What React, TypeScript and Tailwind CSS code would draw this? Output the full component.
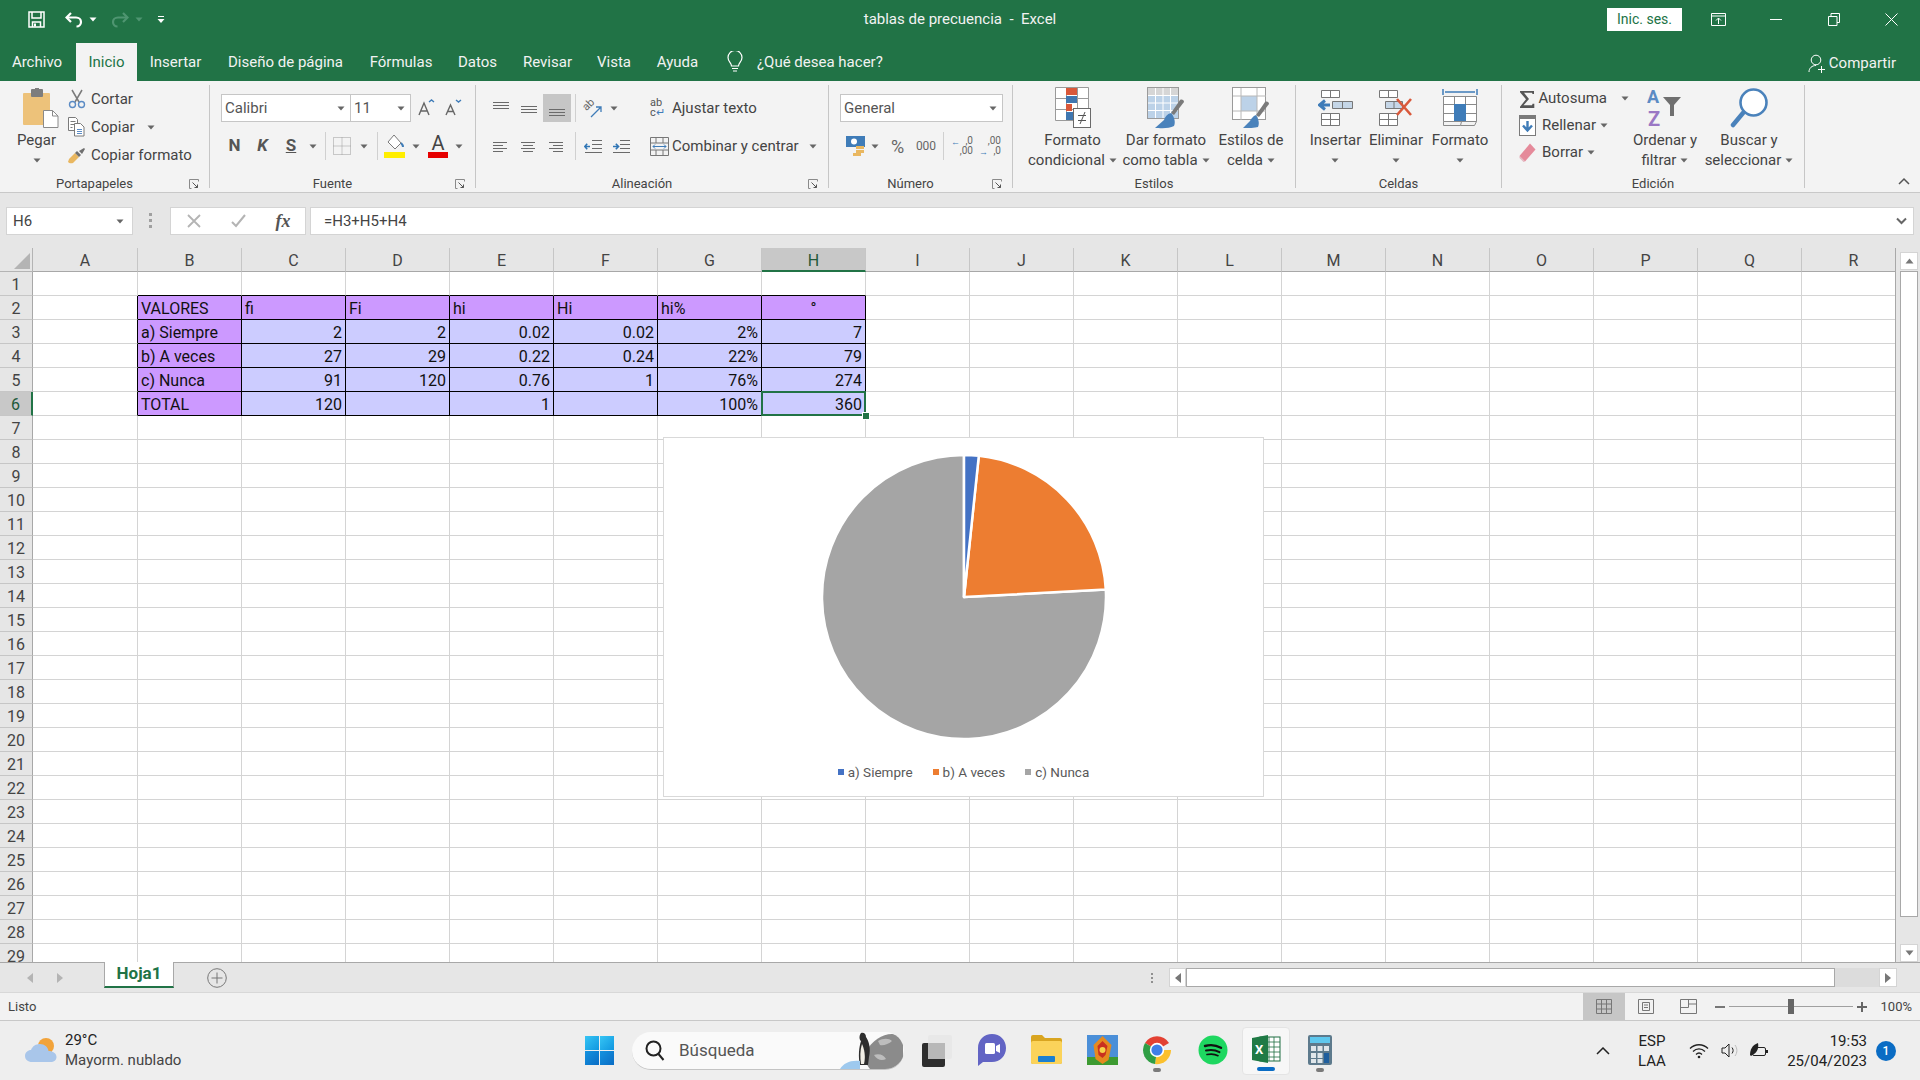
import React from 'react';

const colLetters = ['A', 'B', 'C', 'D', 'E', 'F', 'G', 'H', 'I', 'J', 'K', 'L', 'M', 'N', 'O', 'P', 'Q', 'R'];

// filas 2 a 6 de la tabla, columnas B a H
const tableRows = [
  ['VALORES', 'fi', 'Fi', 'hi', 'Hi', 'hi%', '°'],
  ['a) Siempre', '2', '2', '0.02', '0.02', '2%', '7'],
  ['b) A veces', '27', '29', '0.22', '0.24', '22%', '79'],
  ['c) Nunca', '91', '120', '0.76', '1', '76%', '274'],
  ['TOTAL', '120', '', '1', '', '100%', '360'],
];

const tabs = [
  { label: 'Archivo', w: 'w-[74px]' },
  { label: 'Inicio', w: 'w-[61px] ml-[2px]', active: true },
  { label: 'Insertar', w: 'w-[77px]' },
  { label: 'Diseño de página', w: 'w-[143px]' },
  { label: 'Fórmulas', w: 'w-[88px]' },
  { label: 'Datos', w: 'w-[65px]' },
  { label: 'Revisar', w: 'w-[75px]' },
  { label: 'Vista', w: 'w-[58px]' },
  { label: 'Ayuda', w: 'w-[69px]' },
];

const Caret = ({ color = '#666' }: { color?: string }) => (
  <svg width="8" height="5" viewBox="0 0 8 5"><path d="M0.5 0.5h7L4 4.5z" fill={color} /></svg>
);

const Slot = ({ w, children, active }: { w: string; children?: React.ReactNode; active?: boolean }) => (
  <div className={`${w} h-[28px] flex items-center justify-center shrink-0 ${active ? 'bg-[#c6c6c6]' : ''}`}>{children}</div>
);

const Sep = ({ w = 'w-[8px]' }: { w?: string }) => (
  <div className={`${w} h-[28px] flex justify-center shrink-0`}><div className="w-px h-full bg-[#d0d0d0]" /></div>
);

const Launcher = () => (
  <svg width="10" height="10" viewBox="0 0 10 10" fill="none" stroke="#8a8a8a" strokeWidth="1">
    <path d="M0.5 9.5v-9h9v2M0.5 9.5h2" />
    <path d="M3.5 3.5l5 5M8.5 5.5v3h-3" stroke="#555" />
  </svg>
);

const Group = ({ w, label, launcher, children }: { w: string; label: string; launcher?: boolean; children: React.ReactNode }) => (
  <div className={`${w} h-full flex flex-col border-r border-[#c6c6c6] shrink-0`}>
    <div className="flex-1 min-h-0">{children}</div>
    <div className="h-[14px] flex items-start text-[13px] leading-[14px] text-[#444]">
      <div className="flex-1 text-center pt-[3px]">{label}</div>
      {launcher && <div className="w-[20px] pt-[5px] flex items-center"><Launcher /></div>}
    </div>
  </div>
);

const BigButton = ({ w, icon, lines, caretOwnLine }: { w: string; icon: React.ReactNode; lines: string[]; caretOwnLine?: boolean }) => (
  <div className={`${w} flex flex-col items-center pt-[3px] shrink-0 text-[15px] leading-[20px] text-[#444]`}>
    <div className="h-[40px] flex items-center justify-center">{icon}</div>
    <div className="mt-[2px] flex flex-col items-center whitespace-nowrap">
      {lines.map((l, i) => (
        <div key={i} className="flex items-center gap-[4px]">
          {l}
          {!caretOwnLine && i === lines.length - 1 && <Caret />}
        </div>
      ))}
      {caretOwnLine && <div className="h-[20px] flex items-center"><Caret /></div>}
    </div>
  </div>
);

const AlignLines = ({ kind }: { kind: 'top' | 'mid' | 'bot' | 'left' | 'center' | 'right' }) => {
  const ys = kind === 'top' ? [2, 5, 8] : kind === 'mid' ? [6, 9, 12] : kind === 'bot' ? [9, 12, 15] : [4, 7, 10, 13];
  const seg = (i: number): [number, number] => {
    if (kind === 'left') return i % 2 ? [1, 11] : [1, 15];
    if (kind === 'center') return i % 2 ? [3, 13] : [1, 15];
    if (kind === 'right') return i % 2 ? [5, 15] : [1, 15];
    return [1, 17];
  };
  return (
    <svg width="18" height="17" viewBox="0 0 18 17" stroke="#6a6a6a" strokeWidth="1">
      {ys.map((y, i) => {
        const [a, b] = seg(i);
        return <line key={y} x1={a} x2={b} y1={y + 0.5} y2={y + 0.5} />;
      })}
    </svg>
  );
};

const Indent = ({ flip }: { flip?: boolean }) => (
  <svg width="19" height="17" viewBox="0 0 19 17" stroke="#6a6a6a" strokeWidth="1" fill="none">
    <path d="M8 2.5h10M8 6.5h10M8 10.5h10M1 14.5h17" />
    {flip ? (
      <path d="M1 8.5h5M3.8 5.8L6.5 8.5L3.8 11.2" stroke="#2f75b5" strokeWidth="1.6" />
    ) : (
      <path d="M6 8.5H1M3.2 5.8L0.8 8.5L3.2 11.2" stroke="#2f75b5" strokeWidth="1.6" />
    )}
  </svg>
);

const PasteIcon = () => (
  <svg width="36" height="40" viewBox="0 0 36 40">
    <rect x="0" y="5" width="27" height="32" rx="1" fill="#edc27a" />
    <rect x="8" y="1" width="12" height="8" rx="1" fill="#7d7d7d" />
    <rect x="12" y="0" width="4" height="3" fill="#7d7d7d" />
    <path d="M20.5 22.5h9l5.5 5.5v11.5h-14.5z" fill="#fff" stroke="#8a8a8a" />
    <path d="M29.5 22.5v5.5h5.5" fill="none" stroke="#8a8a8a" />
  </svg>
);

const ScissorsIcon = () => (
  <svg width="18" height="20" viewBox="0 0 18 20" fill="none">
    <path d="M4 1l7 12M14 1L7 13" stroke="#7a7a7a" strokeWidth="1.5" />
    <circle cx="4.5" cy="15.5" r="3" stroke="#5b8bc4" strokeWidth="1.4" />
    <circle cx="13.5" cy="15.5" r="3" stroke="#5b8bc4" strokeWidth="1.4" />
  </svg>
);

const CopyIcon = () => (
  <svg width="17" height="20" viewBox="0 0 17 20" fill="#fff" stroke="#7a7a7a">
    <path d="M0.5 0.5h7l2 2v11h-9z" />
    <path d="M2.5 4.5h5M2.5 7.5h5M2.5 10.5h2" />
    <path d="M6.5 6.5h6l3.5 3.5v9h-9.5z" />
    <path d="M9 12.5h5M9 14.5h5M9 16.5h5" stroke="#5b8bc4" />
  </svg>
);

const BrushIcon = () => (
  <svg width="18" height="17" viewBox="0 0 18 17">
    <path d="M1 12l6-6 4 4-6 6c-2 .6-4 .2-5-1z" fill="#e9b760" />
    <path d="M7 6l2-2 4 4-2 2z" fill="#6f6f6f" />
    <path d="M11 4l5-3 1 1-3 5z" fill="#6f6f6f" />
  </svg>
);

const CondFormatIcon = () => (
  <svg width="36" height="42" viewBox="0 0 36 42">
    <path d="M0.5 0.5h33v33h-33zM11.5 0.5v33M22.5 0.5v33M0.5 11.5h33M0.5 22.5h33" fill="#fff" stroke="#9a9a9a" />
    <rect x="11" y="1" width="11" height="7" fill="#d9583a" />
    <rect x="11" y="9" width="11" height="7" fill="#4077b0" />
    <rect x="11" y="17" width="6" height="7" fill="#d9583a" />
    <rect x="11" y="25" width="7" height="8" fill="#4077b0" />
    <rect x="18.5" y="21.5" width="17" height="19" fill="#fff" stroke="#6a6a6a" />
    <path d="M23 28.5h8M23 33.5h8M30 25l-5 12" stroke="#555" fill="none" />
  </svg>
);

const TableFormatIcon = () => (
  <svg width="38" height="42" viewBox="0 0 38 42">
    <rect x="0.5" y="0.5" width="31" height="31" fill="#fff" stroke="#9a9a9a" />
    <rect x="1" y="1" width="30" height="7" fill="#d6d6d6" />
    <rect x="1" y="8" width="30" height="23" fill="#bcd2e8" />
    <path d="M8.5 1v30M16 1v30M23.5 1v30M1 8.5h30M1 16h30M1 23.5h30" stroke="#fff" />
    <path d="M37 15L27 28l-3-2 9-13c2-1 4 0 4 2z" fill="#7a7a7a" />
    <path d="M24 26c-4 1-6 4-7 7l-9 8c5 0 14 1 19-2 2-4 0-10-3-13z" fill="#4a82bb" />
  </svg>
);

const CellStyleIcon = () => (
  <svg width="38" height="42" viewBox="0 0 38 42">
    <rect x="0.5" y="0.5" width="33" height="32" fill="#fff" stroke="#9a9a9a" />
    <rect x="9" y="9" width="16" height="15" fill="#bcd2e8" />
    <path d="M9 1v32M25 1v32M1 9h33M1 24h33" stroke="#b8b8b8" fill="none" />
    <path d="M37 17L27 30l-3-2 9-13c2-1 4 0 4 2z" fill="#7a7a7a" />
    <path d="M24 28c-3 1-5 4-6 6l-7 7c5 0 12 0 15-1 2-4 0-9-2-12z" fill="#4a82bb" />
  </svg>
);

const InsertIcon = () => (
  <svg width="36" height="36" viewBox="0 0 36 36" fill="#fff" stroke="#777">
    <path d="M3.5 0.5h18v7h-18zM12.5 0.5v7" />
    <path d="M3.5 23.5h18v12h-18zM12.5 23.5v12M3.5 29.5h18" />
    <path d="M14.5 11.5h20v7h-20zM24.5 11.5v7" fill="#c5d6e7" />
    <path d="M12 15H3M7 10.5L1.5 15L7 19.5" stroke="#3f7cb8" strokeWidth="3" fill="none" />
  </svg>
);

const DeleteIcon = () => (
  <svg width="36" height="36" viewBox="0 0 36 36" fill="#fff" stroke="#777">
    <path d="M1.5 0.5h18v7h-18zM10.5 0.5v7" />
    <path d="M1.5 23.5h18v12h-18zM10.5 23.5v12M1.5 29.5h18" />
    <path d="M7.5 11.5h17v7h-17zM16 11.5v7" fill="#c5d6e7" />
    <path d="M19 9l14 16M33 9L19 25" stroke="#d9583a" strokeWidth="2.6" fill="none" />
  </svg>
);

const FormatIcon = () => (
  <svg width="36" height="40" viewBox="0 0 36 40" fill="none">
    <path d="M1 1v6M35 1v6M3 4h30" stroke="#3f7cb8" strokeWidth="1.5" />
    <path d="M1.5 8.5h33v25h-33zM1.5 16.5h33M1.5 25.5h33M12.5 8.5v25M23.5 8.5v25" fill="#fff" stroke="#8a8a8a" />
    <rect x="12" y="16" width="12" height="17" fill="#3f7cb8" />
    <path d="M1.5 33.5v4h17l1-4M18.5 37.5h14l2-4" stroke="#8a8a8a" />
  </svg>
);

const SumIcon = () => (
  <svg width="17" height="18" viewBox="0 0 17 18"><path d="M1 1h14v3h-1.5l-.5-1.3H5l5 6.3-5.5 6.3H13l.6-1.5H15.3V18H1v-1.3L7 9.3 1 2.3z" fill="#555" /></svg>
);

const FillIcon = () => (
  <svg width="18" height="21" viewBox="0 0 18 21">
    <rect x="0.5" y="0.5" width="16" height="20" fill="#fff" stroke="#7a7a7a" />
    <rect x="1" y="1" width="15" height="3" fill="#7a7a7a" />
    <path d="M8.5 6v8M4 10.5l4.5 5 4.5-5" stroke="#3f7cb8" strokeWidth="2.4" fill="none" />
  </svg>
);

const EraserIcon = () => (
  <svg width="17" height="19" viewBox="0 0 17 19"><path d="M11 0.5l5.5 6-10.5 12-5.5-5.5z" fill="#e58a9a" /><path d="M0.5 13l5.5 5.5-1.5 0.5L0.5 15z" fill="#e3b6bf" /></svg>
);

const SortIcon = () => (
  <svg width="36" height="42" viewBox="0 0 36 42">
    <text x="0" y="16" fontSize="18" fontWeight="700" fill="#5b8bc4" fontFamily="Roboto, sans-serif">A</text>
    <text x="1" y="39" fontSize="20" fontWeight="700" fill="#9a77c4" fontFamily="Roboto, sans-serif">Z</text>
    <path d="M16 10h18l-7 8v11h-4V18z" fill="#6f6f6f" />
  </svg>
);

const SearchBigIcon = () => (
  <svg width="38" height="42" viewBox="0 0 38 42" fill="none">
    <circle cx="23.5" cy="15.5" r="13" stroke="#4a82bb" strokeWidth="2.6" fill="#fff" />
    <path d="M13 26L3 38" stroke="#4a82bb" strokeWidth="4.5" strokeLinecap="round" />
  </svg>
);

const Excel = () => (
  <svg width="30" height="30" viewBox="0 0 30 30">
    <rect x="9" y="3" width="20" height="24" fill="#fff" stroke="#1f6e43" />
    <path d="M18 3v24M23 3v24M9 8h20M9 13h20M9 18h20M9 23h20" stroke="#1f6e43" strokeWidth="0.8" />
    <path d="M1 4l16-3v28L1 26z" fill="#1f7a45" />
    <text x="4" y="20" fontSize="13" fontWeight="700" fill="#fff" fontFamily="Roboto, sans-serif">X</text>
  </svg>
);

const WindowsLogo = () => (
  <svg width="29" height="29" viewBox="0 0 29 29">
    <defs>
      <linearGradient id="winA" x1="0" y1="0" x2="1" y2="1"><stop offset="0" stopColor="#36c5f4" /><stop offset="1" stopColor="#1096e0" /></linearGradient>
      <linearGradient id="winB" x1="0" y1="0" x2="1" y2="1"><stop offset="0" stopColor="#1493e0" /><stop offset="1" stopColor="#0a6cc4" /></linearGradient>
    </defs>
    <rect x="0" y="0" width="14" height="14" fill="url(#winA)" />
    <rect x="15" y="0" width="14" height="14" fill="url(#winA)" />
    <rect x="0" y="15" width="14" height="14" fill="url(#winB)" />
    <rect x="15" y="15" width="14" height="14" fill="url(#winB)" />
  </svg>
);

const Penguin = () => (
  <svg width="70" height="38" viewBox="0 0 70 38">
    <path d="M32 20c6-10 16-17 26-17 6 0 10 4 11 10v14c-2 6-5 9-10 11H36c-4-4-6-12-4-18z" fill="#8b8b8b" />
    <path d="M44 10c5-3 11-3 14 0-3 3-9 5-12 4zM40 24c5-2 10 0 12 4-4 2-9 1-12-4z" fill="#bdbdbd" />
    <path d="M27 2c3-1 5 1 5 4 3 4 5 12 3 20l-1 8h-8c-2-8-1-18 1-24-2-1-2-6 0-8z" fill="#2e2e2e" />
    <path d="M28 13c2 4 4 12 2 20h-3c-1-7-1-14 1-20z" fill="#f2efe6" />
    <path d="M6 38c4-6 10-9 20-8v8z" fill="#9ec9ee" />
  </svg>
);

const Chrome = () => (
  <svg width="30" height="30" viewBox="0 0 30 30">
    <path d="M15 15L3 8a14 14 0 0 1 24 0z" fill="#e34133" />
    <path d="M15 15H29A14 14 0 0 1 13 29z" fill="#fbc02d" />
    <path d="M15 15L13 29A14 14 0 0 1 3 8z" fill="#2f9e44" />
    <circle cx="15" cy="15" r="7.2" fill="#fff" />
    <circle cx="15" cy="15" r="5.6" fill="#3f7fe8" />
  </svg>
);

const Spotify = () => (
  <svg width="30" height="30" viewBox="0 0 30 30" fill="none">
    <circle cx="15" cy="15" r="14.5" fill="#1ed760" />
    <path d="M7 11c5-1.500 11-1 16 1.800" stroke="#111" strokeWidth="2.4" strokeLinecap="round" />
    <path d="M8 15.500c4.500-1 9.500-.6 13.500 1.600" stroke="#111" strokeWidth="2" strokeLinecap="round" />
    <path d="M9 19.500c4-.8 8-.5 11 1.200" stroke="#111" strokeWidth="1.700" strokeLinecap="round" />
  </svg>
);

const Dot = ({ on }: { on?: boolean }) => (
  <div className={`${on ? 'w-[18px] bg-[#0a6cc4]' : 'w-[8px] bg-[#7a7a7a]'} h-[4px] rounded-[2px] mt-[3px]`} />
);

const TaskIcon = ({ w, children, run, on }: { w: string; children: React.ReactNode; run?: boolean; on?: boolean }) => (
  <div className={`${w} h-[48px] flex flex-col items-center justify-end pb-[1px] shrink-0 rounded-[4px] ${on ? 'bg-[#f7f7f7] border border-[#e4e4e4]' : ''}`}>
    <div className="h-[30px] flex items-center justify-center">{children}</div>
    <div className="h-[9px] flex items-start justify-center">{(run || on) && <Dot on={on} />}</div>
  </div>
);

const Sheet = () => (
  <div className="relative flex-1 min-w-0 overflow-hidden">
    <div className="grid grid-cols-[33px_105px_repeat(17,104px)] auto-rows-[24px] text-[16px] leading-[25px]">
      {/* cabecera de columnas */}
      <div className="bg-[#e6e6e6] border-r border-b border-[#b4b4b4] flex items-end justify-end p-[2px]">
        <svg width="16" height="16" viewBox="0 0 16 16"><path d="M16 0v16H0z" fill="#b4b4b4" /></svg>
      </div>
      {colLetters.map((c) => (
        <div
          key={c}
          className={`text-center border-r border-[#c6c6c6] ${c === 'H' ? 'bg-[#c8c8c8] border-b-2 border-b-[#217346] text-[#215a3a]' : 'bg-[#e6e6e6] border-b border-b-[#a8a8a8] text-[#444]'}`}
        >
          {c}
        </div>
      ))}
      {Array.from({ length: 29 }, (_, r) => {
        const selRow = r === 5;
        return (
          <React.Fragment key={r}>
            <div className={`text-center border-b border-b-[#c6c6c6] ${selRow ? 'bg-[#c8c8c8] text-[#215a3a] border-r-2 border-r-[#217346]' : 'bg-[#e6e6e6] text-[#444] border-r border-r-[#a8a8a8]'}`}>
              {r + 1}
            </div>
            {colLetters.map((_c, c) => {
              const inTable = r >= 1 && r <= 5 && c >= 1 && c <= 7;
              const rightDark = r >= 1 && r <= 5 && c >= 0 && c <= 7;
              const bottomDark = r >= 0 && r <= 5 && c >= 1 && c <= 7;
              const value = inTable ? tableRows[r - 1][c - 1] : '';
              const purple = inTable && (r === 1 || c === 1);
              const isLeft = c === 1 || (r === 1 && c < 7);
              const isCenter = r === 1 && c === 7;
              const selected = r === 5 && c === 7;
              return (
                <div
                  key={c}
                  className={`relative px-[3px] text-[#111] whitespace-nowrap border-r border-b ${rightDark ? 'border-r-black' : 'border-r-[#d4d4d4]'} ${bottomDark ? 'border-b-black' : 'border-b-[#d4d4d4]'} ${purple ? 'bg-[#cc99ff]' : inTable ? 'bg-[#ccccff]' : 'bg-white'} ${isLeft ? 'text-left' : isCenter ? 'text-center' : 'text-right'}`}
                >
                  {value}
                  {selected && <div className="absolute inset-[-1px] border-2 border-[#217346]" />}
                </div>
              );
            })}
          </React.Fragment>
        );
      })}
    </div>

    {/* tirador de la celda activa */}
    <div className="absolute left-[862px] top-[164px] w-[6px] h-[6px] bg-[#217346] border border-white box-content" />

    {/* gráfico circular flotante */}
    <div className="absolute left-[663px] top-[189px] w-[601px] h-[360px] bg-white border border-[#d9d9d9] flex flex-col items-center pt-[14px]">
      <svg width="290" height="290" viewBox="0 0 290 290">
        <g stroke="#fff" strokeWidth="2.5" strokeLinejoin="round">
          <path d="M145 145L145 3A142 142 0 1 0 286.8 137.6Z" fill="#a5a5a5" />
          <path d="M145 145L159.8 3.8A142 142 0 0 1 286.8 137.6Z" fill="#ed7d31" />
          <path d="M145 145L145 3A142 142 0 0 1 159.8 3.8Z" fill="#4472c4" />
        </g>
      </svg>
      <div className="mt-[22px] flex items-center text-[13.5px] leading-[16px] text-[#595959]">
        <div className="w-[6px] h-[6px] bg-[#4472c4]" />
        <span className="ml-[4px]">a) Siempre</span>
        <div className="ml-[20px] w-[6px] h-[6px] bg-[#ed7d31]" />
        <span className="ml-[4px]">b) A veces</span>
        <div className="ml-[20px] w-[6px] h-[6px] bg-[#a5a5a5]" />
        <span className="ml-[4px]">c) Nunca</span>
      </div>
    </div>
  </div>
);

export default function App() {
  return (
    <div className="w-[1920px] h-[1080px] overflow-hidden flex flex-col bg-white [font-family:Roboto,sans-serif]">
      {/* barra de título */}
      <div className="h-[43px] bg-[#217346] flex items-center text-white shrink-0 pb-[4px]">
        <div className="flex-1 flex items-center">
          <svg className="ml-[28px]" width="17" height="17" viewBox="0 0 17 17" fill="none" stroke="#fff" strokeWidth="1.500">
            <path d="M1 1h15v15H1z" /><path d="M4 1v6h9V1" /><path d="M4.500 16v-5h8v5" /><rect x="6" y="12.500" width="2" height="3" fill="#fff" stroke="none" />
          </svg>
          <svg className="ml-[20px]" width="18" height="16" viewBox="0 0 18 16" fill="none" stroke="#fff" strokeWidth="2.200">
            <path d="M6 1L1.500 5.500L6 10" /><path d="M2 5.500h9c3 0 5 2 5 4.500s-2 4.500-4.500 4.500" />
          </svg>
          <span className="ml-[6px]"><Caret color="#fff" /></span>
          <svg className="ml-[14px]" width="18" height="16" viewBox="0 0 18 16" fill="none" stroke="#4f9571" strokeWidth="2.200">
            <path d="M12 1l4.500 4.500L12 10" /><path d="M16 5.500H7c-3 0-5 2-5 4.500s2 4.500 4.500 4.500" />
          </svg>
          <span className="ml-[6px]"><Caret color="#4f9571" /></span>
          <svg className="ml-[14px]" width="8" height="8" viewBox="0 0 8 8"><path d="M1 0.500h6" stroke="#fff" /><path d="M0.500 3h7L4 7z" fill="#fff" /></svg>
        </div>
        <div className="text-[15px] text-[#f2f2f2] whitespace-pre">tablas de precuencia  -  Excel</div>
        <div className="flex-1 flex items-center justify-end">
          <div className="w-[75px] h-[23px] bg-white text-[#217346] text-[14px] flex items-center justify-center">Inic. ses.</div>
          <div className="w-[73px] flex justify-center">
            <svg width="15" height="13" viewBox="0 0 15 13" fill="none" stroke="#fff"><path d="M0.500 0.500h14v12h-14zM0.500 3h14" /><path d="M7.500 11V5M5 7.500l2.500-2.500 2.500 2.500" /></svg>
          </div>
          <div className="w-[42px] flex justify-center"><div className="w-[12px] h-px bg-white" /></div>
          <div className="w-[74px] flex justify-center">
            <svg width="12" height="13" viewBox="0 0 12 13" fill="none" stroke="#fff"><path d="M0.500 3.500h8.500v9H0.500zM3 3.500V0.500h8.500v9H9" /></svg>
          </div>
          <div className="w-[40px] flex justify-center mr-[9px]">
            <svg width="13" height="13" viewBox="0 0 13 13" stroke="#fff"><path d="M0.500 0.500l12 12M12.500 0.500l-12 12" /></svg>
          </div>
        </div>
      </div>

      {/* pestañas */}
      <div className="h-[38px] bg-[#217346] flex items-stretch text-[15px] text-[#f2f2f2] shrink-0">
        {tabs.map((t) => (
          <div key={t.label} className={`${t.w} flex items-center justify-center ${t.active ? 'bg-[#f3f3f3] text-[#217346]' : ''}`}>{t.label}</div>
        ))}
        <div className="ml-[14px] flex items-center">
          <svg width="18" height="22" viewBox="0 0 18 22" fill="none" stroke="#fff" strokeWidth="1.200">
            <path d="M5.500 15c0-3-3.500-4.500-3.500-8.500a7 7 0 0 1 14 0c0 4-3.500 5.500-3.500 8.500z" /><path d="M6 17.500h6M7 20h4" />
          </svg>
          <span className="ml-[13px]">¿Qué desea hacer?</span>
        </div>
        <div className="ml-auto mr-[24px] flex items-center pt-[3px]">
          <svg width="18" height="20" viewBox="0 0 18 20" fill="none" stroke="#fff"><circle cx="8" cy="6" r="4.800" /><path d="M1 18c0-4 3-6.500 7-6.500M13.500 12v7M10 15.500h7" /></svg>
          <span className="ml-[3px]">Compartir</span>
        </div>
      </div>

      {/* cinta */}
      <div className="h-[112px] bg-[#f3f3f3] border-b border-[#c8c8c8] py-[4px] flex shrink-0">
        <Group w="w-[210px]" label="Portapapeles" launcher>
          <div className="flex">
            <div className="w-[68px] pl-[18px] pt-[3px] flex flex-col items-start">
              <div className="ml-[5px]"><PasteIcon /></div>
              <div className="w-[37px] mt-[2px] text-[15px] leading-[20px] text-[#444] flex flex-col items-center">
                Pegar
                <div className="h-[20px] flex items-center"><Caret /></div>
              </div>
            </div>
            <div className="flex flex-col text-[15px] text-[#444]">
              <div className="h-[28px] flex items-center"><div className="w-[23px]"><ScissorsIcon /></div>Cortar</div>
              <div className="h-[28px] flex items-center"><div className="w-[23px]"><CopyIcon /></div>Copiar<span className="ml-[12px]"><Caret /></span></div>
              <div className="h-[28px] flex items-center"><div className="w-[23px]"><BrushIcon /></div>Copiar formato</div>
            </div>
          </div>
        </Group>

        <Group w="w-[266px]" label="Fuente" launcher>
          <div className="pl-[11px] pt-[9px] flex flex-col gap-[10px] text-[15px] text-[#555]">
            <div className="flex items-center h-[28px]">
              <div className="w-[130px] h-[28px] bg-white border border-[#c6c6c6] flex items-center justify-between px-[3px] pr-[5px]">Calibri<Caret /></div>
              <div className="w-[60px] h-[28px] bg-white border border-l-0 border-[#c6c6c6] flex items-center justify-between pl-[3px] pr-[5px]">11<Caret /></div>
              <Slot w="w-[27px] ml-[1px]">
                <svg width="18" height="18" viewBox="0 0 18 18" fill="none" stroke="#666" strokeWidth="1.400"><path d="M2 16L7 4l5 12M3.500 12h7" /><path d="M12 3l2.500-2 2.500 2" stroke="#3f7cb8" /></svg>
              </Slot>
              <Slot w="w-[27px]">
                <svg width="18" height="18" viewBox="0 0 18 18" fill="none" stroke="#666" strokeWidth="1.400"><path d="M2 16L6.500 6 11 16M3.500 12.500h6" /><path d="M12 1l2.500 2 2.500-2" stroke="#3f7cb8" /></svg>
              </Slot>
            </div>
            <div className="flex items-center h-[28px]">
              <Slot w="w-[27px]"><span className="font-bold text-[17px] text-[#555]">N</span></Slot>
              <Slot w="w-[29px]"><span className="font-bold italic text-[17px] text-[#555]">K</span></Slot>
              <Slot w="w-[28px]"><span className="font-bold underline text-[17px] text-[#555]">S</span></Slot>
              <Slot w="w-[16px]"><Caret /></Slot>
              <Sep w="w-[9px]" />
              <Slot w="w-[24px]">
                <svg width="18" height="18" viewBox="0 0 18 18" fill="none" stroke="#9a9a9a" strokeDasharray="1 1"><path d="M0.500 0.500h17v17h-17zM9 0.500v17M0.500 9h17" /></svg>
              </Slot>
              <Slot w="w-[20px]"><Caret /></Slot>
              <Sep w="w-[7px]" />
              <Slot w="w-[26px]">
                <svg width="21" height="24" viewBox="0 0 21 24" fill="none">
                  <path d="M10 1l7 8-6 6-7-7z" fill="#fff" stroke="#7a7a7a" />
                  <path d="M17 9c1.500 1.500 2 3 2 4" stroke="#3f7cb8" strokeWidth="2" />
                  <rect x="0" y="18" width="21" height="6" fill="#ffee00" />
                </svg>
              </Slot>
              <Slot w="w-[18px]"><Caret /></Slot>
              <Slot w="w-[26px]">
                <div className="w-[20px] flex flex-col items-center text-[20px] leading-[17px] text-[#444]">A<div className="w-[20px] h-[6px] bg-[#e60000]" /></div>
              </Slot>
              <Slot w="w-[16px]"><Caret /></Slot>
            </div>
          </div>
        </Group>

        <Group w="w-[353px]" label="Alineación" launcher>
          <div className="pl-[11px] pt-[9px] flex">
            <div className="flex flex-col gap-[10px]">
              <div className="flex items-center">
                <Slot w="w-[28px]"><AlignLines kind="top" /></Slot>
                <Slot w="w-[28px]"><AlignLines kind="mid" /></Slot>
                <Slot w="w-[28px]" active><AlignLines kind="bot" /></Slot>
                <Sep />
                <Slot w="w-[30px]">
                  <svg width="24" height="24" viewBox="0 0 24 24" fill="none">
                    <text x="1" y="11" fontSize="11" fill="#666" fontFamily="Roboto, sans-serif" transform="rotate(-45 8 9)">ab</text>
                    <path d="M9 21l10-10M14 11h5v5" stroke="#3f7cb8" strokeWidth="1.300" />
                  </svg>
                </Slot>
                <Slot w="w-[10px]"><Caret /></Slot>
              </div>
              <div className="flex items-center">
                <Slot w="w-[28px]"><AlignLines kind="left" /></Slot>
                <Slot w="w-[28px]"><AlignLines kind="center" /></Slot>
                <Slot w="w-[28px]"><AlignLines kind="right" /></Slot>
                <Sep />
                <Slot w="w-[28px]"><Indent /></Slot>
                <Slot w="w-[28px]"><Indent flip /></Slot>
              </div>
            </div>
            <div className="ml-[15px] flex flex-col gap-[10px] text-[15px] text-[#444]">
              <div className="h-[28px] flex items-center">
                <span className="w-[22px] text-[11px] leading-[10px] text-[#555]">ab<br />c<span className="text-[#3f7cb8]">↵</span></span>Ajustar texto
              </div>
              <div className="h-[28px] flex items-center">
                <div className="w-[22px]">
                  <svg width="19" height="19" viewBox="0 0 19 19" fill="none" stroke="#777"><path d="M0.500 0.500h18v18h-18zM0.500 6h18M0.500 13h18M6 0.500V6M13 0.500V6M6 13v5.500M13 13v5.500" /><path d="M3 9.500h13M5 7.500l-2 2 2 2M14 7.500l2 2-2 2" stroke="#3f7cb8" /></svg>
                </div>
                Combinar y centrar
                <span className="ml-[10px]"><Caret /></span>
              </div>
            </div>
          </div>
        </Group>

        <Group w="w-[184px]" label="Número" launcher>
          <div className="pl-[11px] pt-[9px] flex flex-col gap-[10px] text-[15px] text-[#555]">
            <div className="w-[163px] h-[28px] bg-white border border-[#c6c6c6] flex items-center justify-between px-[3px] pr-[5px]">General<Caret /></div>
            <div className="flex items-center h-[28px]">
              <Slot w="w-[26px] ml-[3px]">
                <svg width="20" height="22" viewBox="0 0 20 22"><rect x="0" y="1" width="19" height="11" fill="#3f7cb8" /><circle cx="8" cy="6.500" r="3" fill="#fff" /><path d="M3 12h5v8h8v-8" fill="#f3f3f3" /><rect x="10" y="11" width="8" height="3" fill="#e9b760" /><rect x="10" y="15" width="8" height="3" fill="#e9b760" /><rect x="7" y="18" width="8" height="3" fill="#e9b760" /></svg>
              </Slot>
              <Slot w="w-[12px]"><Caret /></Slot>
              <Slot w="w-[33px]"><span className="text-[18px] text-[#666]">%</span></Slot>
              <Slot w="w-[24px]"><span className="text-[12px] text-[#666]">000</span></Slot>
              <Sep w="w-[10px]" />
              <Slot w="w-[28px]">
                <div className="relative w-[22px] h-[20px] text-[10px] leading-[10px] text-[#666] text-right"><span className="absolute left-0 top-[1px] text-[#3f7cb8] text-[9px] font-bold">←</span>,0<br />,00</div>
              </Slot>
              <Slot w="w-[28px]">
                <div className="relative w-[22px] h-[20px] text-[10px] leading-[10px] text-[#666] text-right">,00<br />,0<span className="absolute left-0 top-[11px] text-[#3f7cb8] text-[9px] font-bold">→</span></div>
              </Slot>
            </div>
          </div>
        </Group>

        <Group w="w-[283px]" label="Estilos">
          <div className="pl-[13px] flex">
            <BigButton w="w-[93px]" icon={<CondFormatIcon />} lines={['Formato', 'condicional']} />
            <BigButton w="w-[94px]" icon={<TableFormatIcon />} lines={['Dar formato', 'como tabla']} />
            <BigButton w="w-[76px]" icon={<CellStyleIcon />} lines={['Estilos de', 'celda']} />
          </div>
        </Group>

        <Group w="w-[206px]" label="Celdas">
          <div className="pl-[10px] flex">
            <BigButton w="w-[59px]" icon={<InsertIcon />} lines={['Insertar']} caretOwnLine />
            <BigButton w="w-[62px]" icon={<DeleteIcon />} lines={['Eliminar']} caretOwnLine />
            <BigButton w="w-[66px]" icon={<FormatIcon />} lines={['Formato']} caretOwnLine />
          </div>
        </Group>

        <Group w="w-[303px]" label="Edición">
          <div className="pl-[17px] flex">
            <div className="w-[110px] flex flex-col text-[15px] text-[#444]">
              <div className="h-[27px] flex items-center"><div className="w-[23px]"><SumIcon /></div>Autosuma<span className="ml-[14px]"><Caret /></span></div>
              <div className="h-[27px] flex items-center"><div className="w-[23px]"><FillIcon /></div>Rellenar<span className="ml-[4px]"><Caret /></span></div>
              <div className="h-[27px] flex items-center"><div className="w-[23px]"><EraserIcon /></div>Borrar<span className="ml-[4px]"><Caret /></span></div>
            </div>
            <BigButton w="w-[72px]" icon={<SortIcon />} lines={['Ordenar y', 'filtrar']} />
            <BigButton w="w-[96px]" icon={<SearchBigIcon />} lines={['Buscar y', 'seleccionar']} />
          </div>
        </Group>

        <div className="flex-1 flex items-end justify-end pr-[10px] pb-[3px]">
          <svg width="12" height="8" viewBox="0 0 12 8" fill="none" stroke="#555" strokeWidth="1.500"><path d="M1 7l5-5 5 5" /></svg>
        </div>
      </div>

      {/* barra de fórmulas */}
      <div className="h-[55px] bg-[#e6e6e6] flex items-center pl-[6px] pr-[6px] shrink-0 text-[15px] leading-[20px] text-[#444]">
        <div className="w-[127px] h-[28px] bg-white border border-[#d4d4d4] flex items-center justify-between pl-[6px] pr-[8px] pt-[1px]">H6<Caret /></div>
        <div className="w-[37px] flex flex-col items-center gap-[3px] pr-[3px]">
          <div className="w-[3px] h-[3px] bg-[#a0a0a0]" /><div className="w-[3px] h-[3px] bg-[#a0a0a0]" /><div className="w-[3px] h-[3px] bg-[#a0a0a0]" />
        </div>
        <div className="w-[136px] h-[28px] bg-white border border-[#d4d4d4] flex items-center">
          <div className="w-[46px] flex justify-center"><svg width="14" height="14" viewBox="0 0 14 14" stroke="#b4b4b4" strokeWidth="1.800"><path d="M1 1l12 12M13 1L1 13" /></svg></div>
          <div className="w-[44px] flex justify-center"><svg width="16" height="14" viewBox="0 0 16 14" fill="none" stroke="#b4b4b4" strokeWidth="2"><path d="M1 8l4 4 9-11" /></svg></div>
          <div className="w-[44px] text-center [font-family:'Liberation_Serif',serif] italic font-bold text-[18px] text-[#555]">fx</div>
        </div>
        <div className="ml-[4px] flex-1 h-[28px] bg-white border border-[#d4d4d4] flex items-center justify-between pl-[13px] pr-[6px] pt-[1px]">
          =H3+H5+H4
          <svg width="11" height="9" viewBox="0 0 11 9" fill="none" stroke="#666" strokeWidth="2"><path d="M1 1.500l4.500 4.500 4.500-4.500" /></svg>
        </div>
      </div>

      {/* hoja */}
      <div className="flex-1 min-h-0 flex border-b border-[#a8a8a8]">
        <Sheet />
        <div className="w-[25px] bg-[#e6e6e6] pl-[4px] pt-[4px] flex flex-col border-l border-[#a8a8a8]">
          <div className="w-[18px] h-[18px] bg-white border border-[#d4d4d4] flex items-center justify-center"><svg width="9" height="6" viewBox="0 0 9 6"><path d="M0.500 5.500h8L4.500 0.500z" fill="#777" /></svg></div>
          <div className="w-[18px] h-[646px] bg-white border border-[#a8a8a8] mt-[1px]" />
          <div className="flex-1" />
          <div className="w-[18px] h-[18px] bg-white border border-[#d4d4d4] flex items-center justify-center"><svg width="9" height="6" viewBox="0 0 9 6"><path d="M0.500 0.500h8L4.500 5.500z" fill="#777" /></svg></div>
        </div>
      </div>

      {/* pestañas de hoja */}
      <div className="h-[29px] bg-[#e6e6e6] flex items-start shrink-0">
        <div className="w-[104px] h-full flex items-center pl-[27px] gap-[24px]">
          <svg width="6" height="10" viewBox="0 0 6 10"><path d="M6 0v10L0 5z" fill="#b4b4b4" /></svg>
          <svg width="6" height="10" viewBox="0 0 6 10"><path d="M0 0v10l6-5z" fill="#b4b4b4" /></svg>
        </div>
        <div className="w-[70px] h-[26px] bg-white border-x border-[#a8a8a8] border-b-2 border-b-[#217346] text-[#217346] font-bold text-[17px] flex items-center justify-center -mt-px">Hoja1</div>
        <div className="h-full flex items-center ml-[33px]">
          <svg width="20" height="20" viewBox="0 0 20 20" fill="none" stroke="#777"><circle cx="10" cy="10" r="9.300" /><path d="M10 4.500v11M4.500 10h11" /></svg>
        </div>
        <div className="h-full flex items-center ml-[924px] flex-col justify-center gap-[2px]">
          <div className="w-[2px] h-[2px] bg-[#909090]" /><div className="w-[2px] h-[2px] bg-[#909090]" /><div className="w-[2px] h-[2px] bg-[#909090]" />
        </div>
        <div className="ml-[16px] mt-[5px] h-[19px] flex items-stretch">
          <div className="w-[17px] bg-white border border-[#d4d4d4] flex items-center justify-center"><svg width="6" height="10" viewBox="0 0 6 10"><path d="M6 0v10L0 5z" fill="#777" /></svg></div>
          <div className="w-[649px] bg-white border border-[#a8a8a8]" />
          <div className="w-[44px] bg-[#dcdcdc]" />
          <div className="w-[18px] bg-white border border-[#d4d4d4] flex items-center justify-center"><svg width="6" height="10" viewBox="0 0 6 10"><path d="M0 0v10l6-5z" fill="#777" /></svg></div>
        </div>
      </div>

      {/* barra de estado */}
      <div className="h-[28px] bg-[#f2f2f2] border-t border-[#d8d8d8] flex items-stretch text-[13px] text-[#444] shrink-0">
        <div className="pl-[8px] flex items-center">Listo</div>
        <div className="ml-auto flex items-center">
          <div className="w-[42px] h-[28px] bg-[#c6c6c6] flex items-center justify-center">
            <svg width="16" height="15" viewBox="0 0 16 15" fill="none" stroke="#777"><path d="M0.500 0.500h15v14h-15zM5.500 0.500v14M10.500 0.500v14M0.500 5h15M0.500 10h15" /></svg>
          </div>
          <div className="w-[42px] flex justify-center">
            <svg width="16" height="15" viewBox="0 0 16 15" fill="none" stroke="#777"><path d="M0.500 0.500h15v14h-15z" /><path d="M4.500 3.500h7v8h-7zM6 6h4M6 8.500h4" /></svg>
          </div>
          <div className="w-[42px] flex justify-center">
            <svg width="17" height="15" viewBox="0 0 17 15" fill="none" stroke="#777"><path d="M0.500 0.500h16v14h-16zM8.500 0.500v8M0.500 8.500h8M16.500 5h-8" /></svg>
          </div>
          <div className="w-[10px] h-[2px] bg-[#777] ml-[6px]" />
          <div className="ml-[4px] w-[124px] h-px bg-[#a0a0a0] relative">
            <div className="absolute left-[59px] -top-[7px] w-[6px] h-[15px] bg-[#666]" />
          </div>
          <div className="ml-[4px] relative w-[10px] h-[10px]">
            <div className="absolute left-0 top-[4px] w-[10px] h-[2px] bg-[#666]" />
            <div className="absolute left-[4px] top-0 w-[2px] h-[10px] bg-[#666]" />
          </div>
          <div className="w-[53px] pr-[8px] text-right">100%</div>
        </div>
      </div>

      {/* barra de tareas */}
      <div className="h-[60px] bg-[#eeeeee] border-t border-[#c8c8c8] flex items-center shrink-0 text-[#222]">
        <div className="w-[585px] flex items-center pl-[25px] shrink-0">
          <svg width="32" height="30" viewBox="0 0 32 30">
            <circle cx="21" cy="10" r="8" fill="#f2a33a" />
            <path d="M7 26c-4 0-7-2.500-7-6 0-3.500 3-6 6-6 1.500-4 5-6 9-6 4.500 0 8 3 8.500 7 4.500 0 8 2.500 8 6 0 3-2.500 5-6 5z" fill="#a9c6ea" />
          </svg>
          <div className="ml-[8px] flex flex-col text-[15px] leading-[20px] -mt-[1px]">
            <span>29°C</span>
            <span className="text-[#444]">Mayorm. nublado</span>
          </div>
        </div>
        <WindowsLogo />
        <div className="ml-[18px] w-[272px] h-[38px] rounded-full bg-[#fafafa] border-b border-[#c4c4c4] flex items-center pl-[13px] overflow-hidden shrink-0">
          <svg width="20" height="21" viewBox="0 0 20 21" fill="none" stroke="#222" strokeWidth="2"><circle cx="8.500" cy="8.500" r="7" /><path d="M13.500 14l5 6" /></svg>
          <span className="ml-[14px] text-[17px] text-[#555] pt-[1px]">Búsqueda</span>
          <div className="ml-auto flex items-end h-full"><Penguin /></div>
        </div>
        <div className="ml-[5px] flex items-center">
          <TaskIcon w="w-[55px]">
            <svg width="30" height="34" viewBox="0 0 30 34"><rect x="0" y="10" width="23" height="24" rx="2" fill="#2e2e2e" /><rect x="6" y="2" width="24" height="24" rx="2" fill="#e8e8e8" /><rect x="6" y="10" width="17" height="16" fill="#b8b8b8" /></svg>
          </TaskIcon>
          <TaskIcon w="w-[55px]">
            <svg width="30" height="34" viewBox="0 0 30 34"><path d="M15 1c8 0 14 6 14 14s-6 14-14 14h-9l-5 4v-18C1 7 7 1 15 1z" fill="#6264c4" /><rect x="8" y="10" width="10" height="11" rx="1.500" fill="#fff" /><path d="M19 13l4-2v9l-4-2z" fill="#fff" /></svg>
          </TaskIcon>
          <TaskIcon w="w-[55px]">
            <svg width="31" height="29" viewBox="0 0 31 29"><path d="M0 2a2 2 0 0 1 2-2h9l3 3h15a2 2 0 0 1 2 2v22a2 2 0 0 1-2 2H2a2 2 0 0 1-2-2z" fill="#d9a520" /><rect x="0" y="6" width="31" height="23" rx="2" fill="#fbd35a" /><rect x="7" y="21" width="17" height="6" rx="1" fill="#1b7fd0" /></svg>
          </TaskIcon>
          <TaskIcon w="w-[56px]">
            <svg width="31" height="30" viewBox="0 0 31 30">
              <rect width="31" height="30" fill="#4b8fd8" />
              <rect y="22" width="31" height="8" fill="#3d9a31" />
              <path d="M15.500 1l9 9-3 15-6 4-7-5-2-14z" fill="#e58a1f" />
              <path d="M15.500 6l5 5-2 9-3 3-4-3-1-9z" fill="#c9301f" />
              <circle cx="15.500" cy="15" r="3" fill="#f6d34a" />
            </svg>
          </TaskIcon>
          <TaskIcon w="w-[54px]" run><Chrome /></TaskIcon>
          <TaskIcon w="w-[58px]"><Spotify /></TaskIcon>
          <TaskIcon w="w-[48px]" on><Excel /></TaskIcon>
          <TaskIcon w="w-[60px]" run>
            <svg width="24" height="30" viewBox="0 0 24 30">
              <rect width="24" height="30" rx="2" fill="#5d7a8c" />
              <rect x="2" y="2" width="20" height="6" fill="#5ec8ee" />
              <g fill="#dfe6ea"><rect x="3" y="11" width="5" height="5" /><rect x="9.500" y="11" width="5" height="5" /><rect x="3" y="18" width="5" height="5" /><rect x="9.500" y="18" width="5" height="5" /><rect x="3" y="24" width="5" height="4" /><rect x="9.500" y="24" width="5" height="4" /></g>
              <rect x="16" y="11" width="5" height="5" fill="#dfe6ea" />
              <rect x="16" y="18" width="5" height="10" fill="#1f5f9e" />
            </svg>
          </TaskIcon>
        </div>
        <div className="flex-1 flex items-center pl-[246px]">
          <svg width="14" height="8" viewBox="0 0 14 8" fill="none" stroke="#222" strokeWidth="1.500"><path d="M1 7l6-6 6 6" /></svg>
          <div className="ml-[18px] w-[48px] flex flex-col items-center text-[15px] leading-[20px]"><span>ESP</span><span>LAA</span></div>
          <svg className="ml-[13px]" width="20" height="16" viewBox="0 0 20 16" fill="none" stroke="#222" strokeWidth="1.300"><path d="M1 5.500c5-5 13-5 18 0M4 8.500c3.500-3.500 8.500-3.500 12 0M7 11.500c2-2 4-2 6 0" /><circle cx="10" cy="14" r="1.300" fill="#222" stroke="none" /></svg>
          <svg className="ml-[12px]" width="20" height="17" viewBox="0 0 20 17" fill="none" stroke="#222"><path d="M1 6v5h3l4 4V2L4 6z" /><path d="M11 5.500c1.500 2 1.500 4 0 6" /><path d="M14 3c2.500 3.500 2.500 7.500 0 11" stroke="#bdbdbd" /></svg>
          <svg className="ml-[8px]" width="20" height="17" viewBox="0 0 20 17"><rect x="3.500" y="5.500" width="13" height="8" rx="1.500" fill="none" stroke="#222" /><rect x="17" y="8" width="2" height="3" fill="#222" /><path d="M1 13c0-5 2-10 8-12 1 5-1 9-4 11l-3 2z" fill="#222" /></svg>
          <div className="ml-[20px] w-[78px] flex flex-col items-end text-[15px] leading-[20px] shrink-0 whitespace-nowrap"><span>19:53</span><span>25/04/2023</span></div>
          <div className="ml-[9px] w-[20px] h-[20px] rounded-full bg-[#0a6cc4] text-white text-[12px] font-medium flex items-center justify-center shrink-0">1</div>
        </div>
      </div>
    </div>
  );
}
